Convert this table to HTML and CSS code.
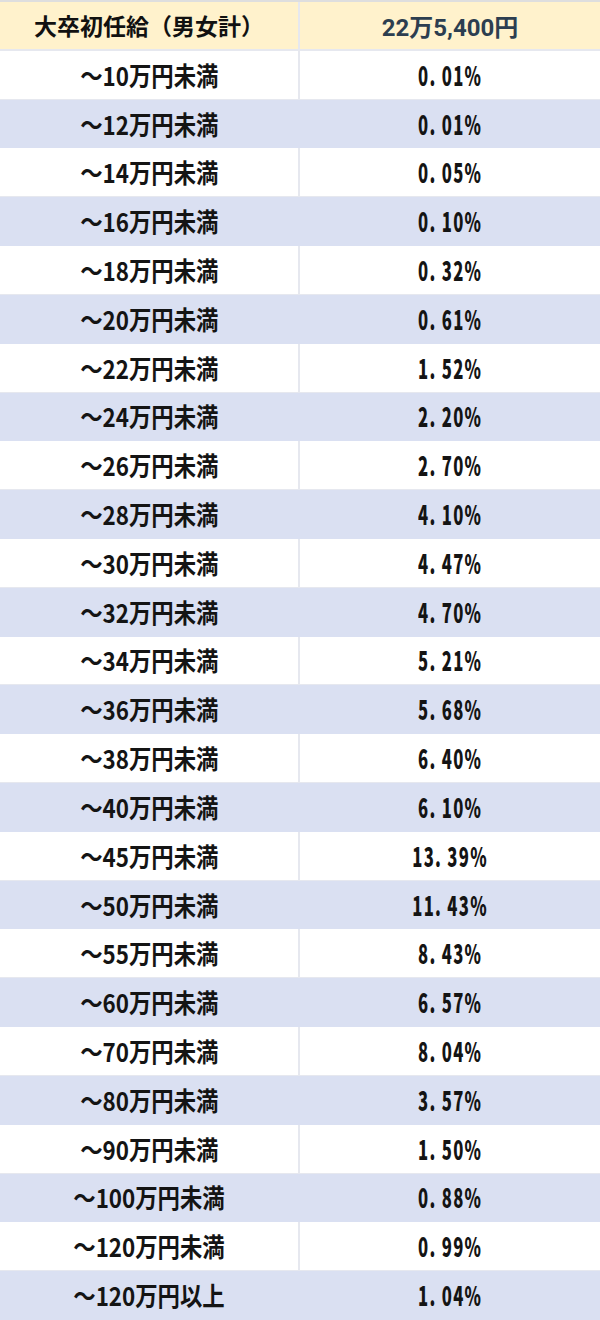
FILE: index.html
```html
<!DOCTYPE html>
<html lang="ja">
<head>
<meta charset="utf-8">
<link rel="stylesheet" href="styles.css">
</head>
<body>
<div class="table">
  <div class="cell head">大卒初任給（男女計）</div>
  <div class="cell head val">22万5,400円</div>
  <div class="cell"><span class="lbl">～10万円未満</span></div><div class="cell"><span class="num">0<span class="dot">.</span>01%</span></div>
  <div class="cell alt"><span class="lbl">～12万円未満</span></div><div class="cell alt"><span class="num">0<span class="dot">.</span>01%</span></div>
  <div class="cell"><span class="lbl">～14万円未満</span></div><div class="cell"><span class="num">0<span class="dot">.</span>05%</span></div>
  <div class="cell alt"><span class="lbl">～16万円未満</span></div><div class="cell alt"><span class="num">0<span class="dot">.</span>10%</span></div>
  <div class="cell"><span class="lbl">～18万円未満</span></div><div class="cell"><span class="num">0<span class="dot">.</span>32%</span></div>
  <div class="cell alt"><span class="lbl">～20万円未満</span></div><div class="cell alt"><span class="num">0<span class="dot">.</span>61%</span></div>
  <div class="cell"><span class="lbl">～22万円未満</span></div><div class="cell"><span class="num">1<span class="dot">.</span>52%</span></div>
  <div class="cell alt"><span class="lbl">～24万円未満</span></div><div class="cell alt"><span class="num">2<span class="dot">.</span>20%</span></div>
  <div class="cell"><span class="lbl">～26万円未満</span></div><div class="cell"><span class="num">2<span class="dot">.</span>70%</span></div>
  <div class="cell alt"><span class="lbl">～28万円未満</span></div><div class="cell alt"><span class="num">4<span class="dot">.</span>10%</span></div>
  <div class="cell"><span class="lbl">～30万円未満</span></div><div class="cell"><span class="num">4<span class="dot">.</span>47%</span></div>
  <div class="cell alt"><span class="lbl">～32万円未満</span></div><div class="cell alt"><span class="num">4<span class="dot">.</span>70%</span></div>
  <div class="cell"><span class="lbl">～34万円未満</span></div><div class="cell"><span class="num">5<span class="dot">.</span>21%</span></div>
  <div class="cell alt"><span class="lbl">～36万円未満</span></div><div class="cell alt"><span class="num">5<span class="dot">.</span>68%</span></div>
  <div class="cell"><span class="lbl">～38万円未満</span></div><div class="cell"><span class="num">6<span class="dot">.</span>40%</span></div>
  <div class="cell alt"><span class="lbl">～40万円未満</span></div><div class="cell alt"><span class="num">6<span class="dot">.</span>10%</span></div>
  <div class="cell"><span class="lbl">～45万円未満</span></div><div class="cell"><span class="num">13<span class="dot">.</span>39%</span></div>
  <div class="cell alt"><span class="lbl">～50万円未満</span></div><div class="cell alt"><span class="num">11<span class="dot">.</span>43%</span></div>
  <div class="cell"><span class="lbl">～55万円未満</span></div><div class="cell"><span class="num">8<span class="dot">.</span>43%</span></div>
  <div class="cell alt"><span class="lbl">～60万円未満</span></div><div class="cell alt"><span class="num">6<span class="dot">.</span>57%</span></div>
  <div class="cell"><span class="lbl">～70万円未満</span></div><div class="cell"><span class="num">8<span class="dot">.</span>04%</span></div>
  <div class="cell alt"><span class="lbl">～80万円未満</span></div><div class="cell alt"><span class="num">3<span class="dot">.</span>57%</span></div>
  <div class="cell"><span class="lbl">～90万円未満</span></div><div class="cell"><span class="num">1<span class="dot">.</span>50%</span></div>
  <div class="cell alt"><span class="lbl">～100万円未満</span></div><div class="cell alt"><span class="num">0<span class="dot">.</span>88%</span></div>
  <div class="cell"><span class="lbl">～120万円未満</span></div><div class="cell"><span class="num">0<span class="dot">.</span>99%</span></div>
  <div class="cell alt"><span class="lbl">～120万円以上</span></div><div class="cell alt"><span class="num">1<span class="dot">.</span>04%</span></div>
</div>
</body>
</html>
```
FILE: styles.css
```css
html, body {
  margin: 0;
  padding: 0;
  background: #ffffff;
}
.table {
  width: 600px;
  height: 1320px;
  display: grid;
  grid-template-columns: 300px 300px;
  grid-template-rows: repeat(27, 1fr);
  border-top: 2px solid #dedede;
  box-sizing: border-box;
  font-family: "Noto Sans CJK JP", "Noto Sans", sans-serif;
  font-weight: 700;
  color: #141414;
}
.cell {
  display: flex;
  align-items: center;
  justify-content: center;
  background: #ffffff;
  border-bottom: 1px solid #e6e8ef;
  overflow: hidden;
}
.cell:nth-child(odd) {
  border-right: 2px solid #e6e8ef;
}
.cell.alt {
  background: #dae0f2;
  border-color: #dae0f2;
}
.head {
  background: #fff2cc;
  font-size: 23px;
  color: #111;
  border-bottom: 2px solid #e6e8ef;
}
.head.val {
  font-family: Roboto, "Noto Sans CJK JP", sans-serif;
  font-size: 24px;
  color: #2c3e50;
}
.lbl {
  display: inline-block;
  font-size: 26px;
  line-height: 1;
  transform: scaleX(0.86);
}
.num {
  display: inline-block;
  font-size: 26px;
  font-weight: 900;
  line-height: 1;
  letter-spacing: 2px;
  transform: scaleX(0.64);
}
.dot {
  margin-right: 8px;
}
```
